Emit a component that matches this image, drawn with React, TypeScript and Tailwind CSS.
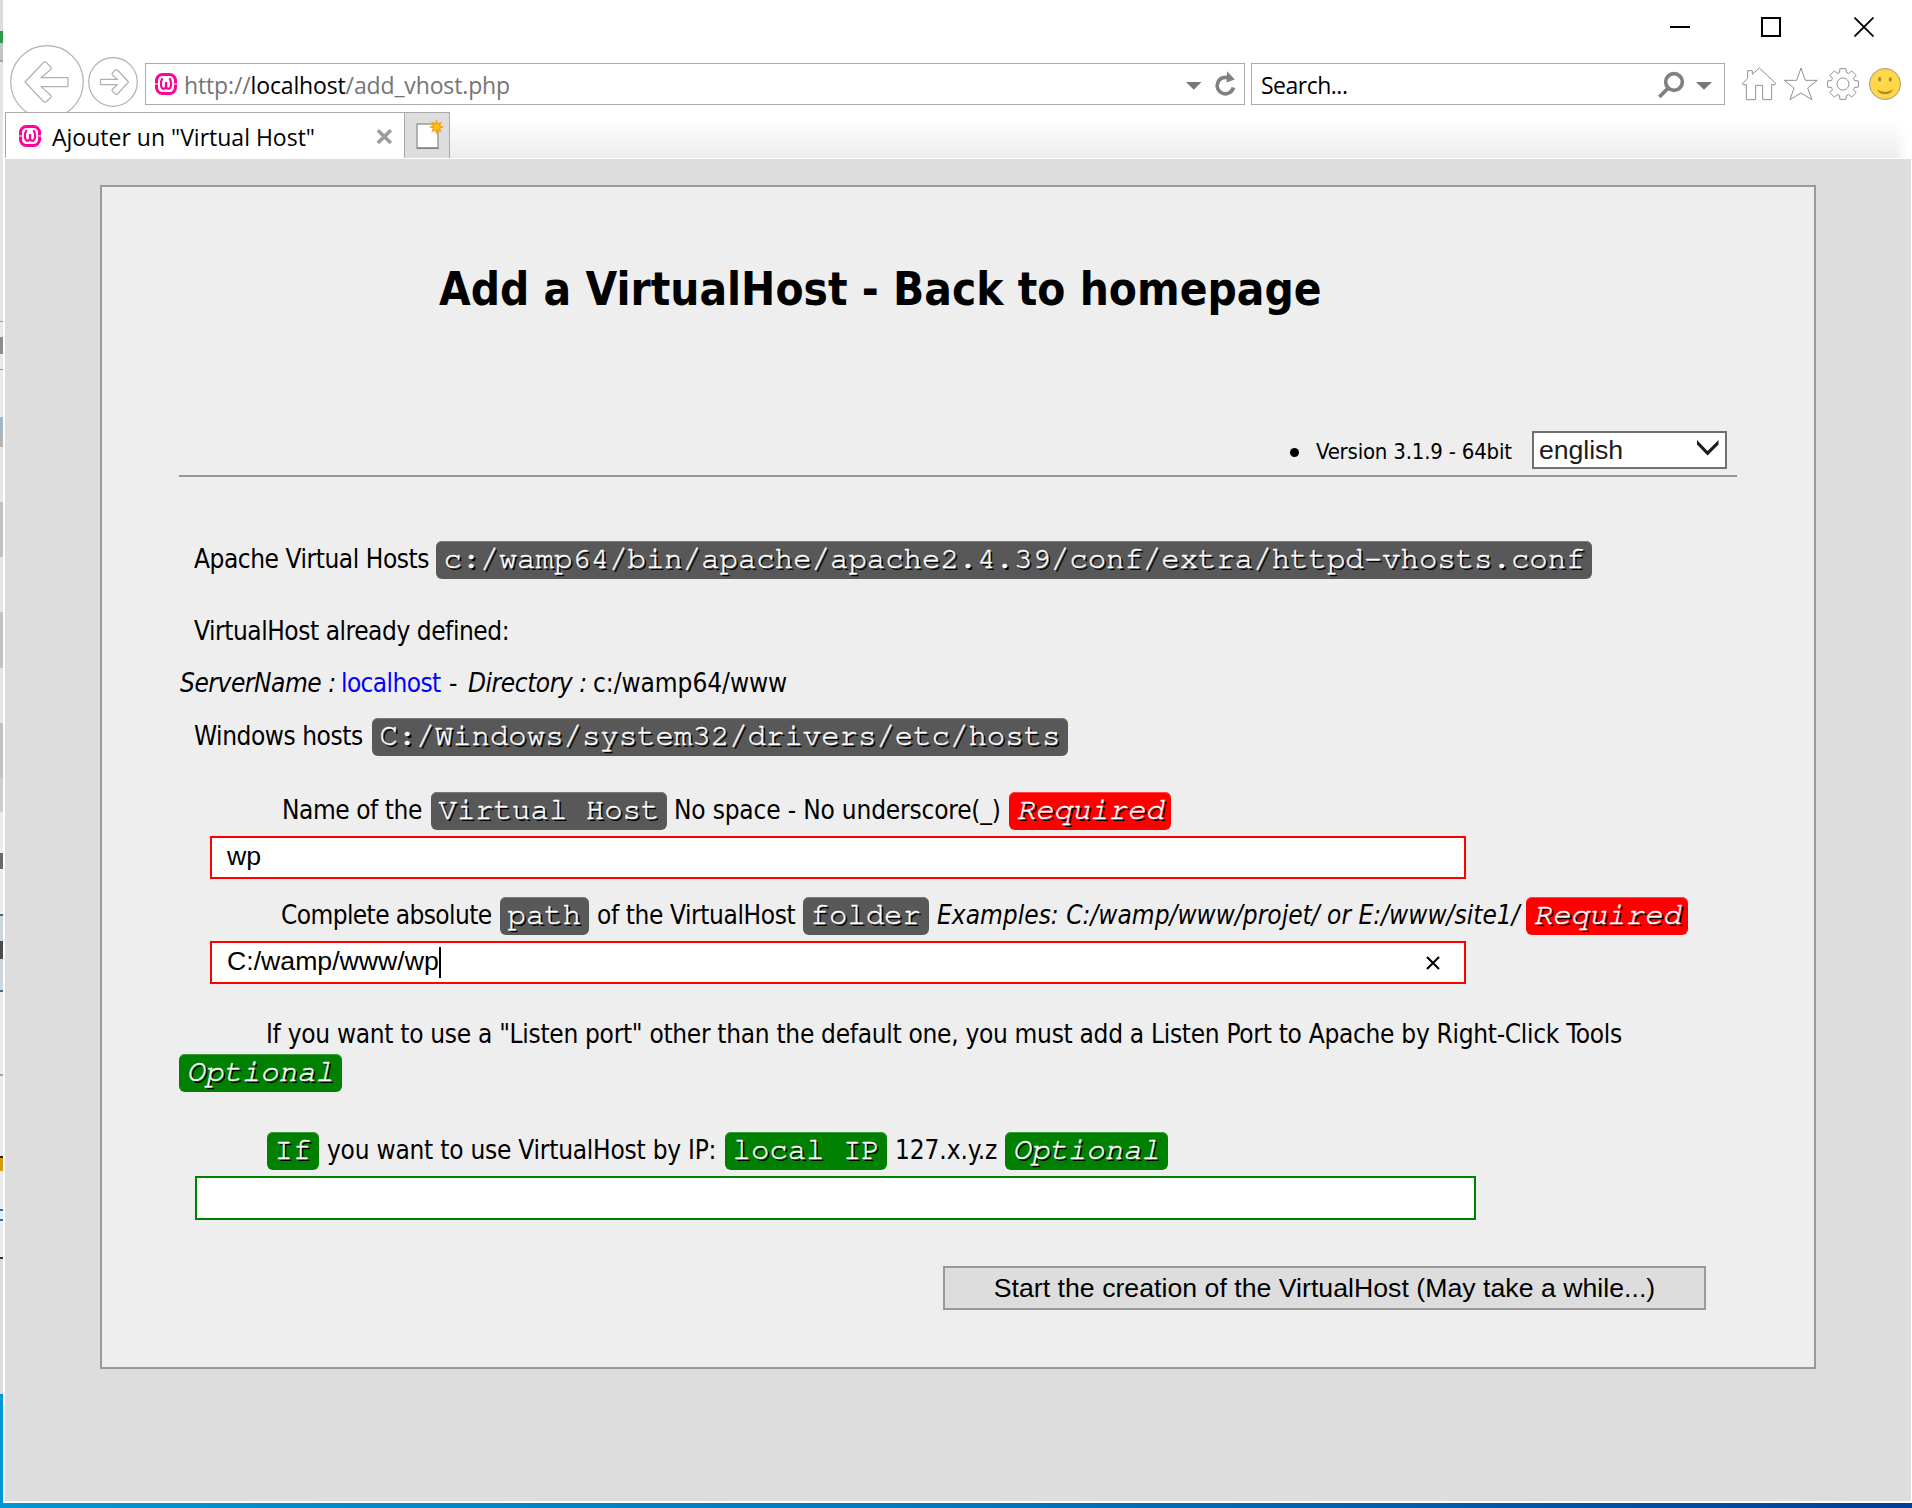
import type { ReactNode } from "react";

/* Slice of the windows lying behind the browser, visible along the left edge. */
const backdrop: [string, string][] = [
  ["h-[31px]", "bg-[#dcdcdc]"],
  ["h-[12px]", "bg-[#2e9a4a]"],
  ["h-[17px]", "bg-[#c4c4c4]"],
  ["h-[2px]", "bg-[#a4a4a4]"],
  ["h-[259px]", "bg-[#e4e5e6]"],
  ["h-[1px]", "bg-[#999999]"],
  ["h-[15px]", "bg-[#e9e9e9]"],
  ["h-[17px]", "bg-[#8c8c8c]"],
  ["h-[15px]", "bg-[#e9e9e9]"],
  ["h-[1px]", "bg-[#999999]"],
  ["h-[47px]", "bg-[#e9e9e9]"],
  ["h-[19px]", "bg-[#a3b8c8]"],
  ["h-[11px]", "bg-[#b4b4b4]"],
  ["h-[55px]", "bg-[#e6e6e6]"],
  ["h-[55px]", "bg-[#c2c2c2]"],
  ["h-[55px]", "bg-[#e6e6e6]"],
  ["h-[56px]", "bg-[#c2c2c2]"],
  ["h-[55px]", "bg-[#e6e6e6]"],
  ["h-[55px]", "bg-[#c2c2c2]"],
  ["h-[34px]", "bg-[#cfcfcf]"],
  ["h-[41px]", "bg-[#ececec]"],
  ["h-[16px]", "bg-[#6a6a6a]"],
  ["h-[45px]", "bg-[#ececec]"],
  ["h-[2px]", "bg-[#37717a]"],
  ["h-[25px]", "bg-[#cfd6dc]"],
  ["h-[18px]", "bg-[#4a4c50]"],
  ["h-[31px]", "bg-[#cfd6dc]"],
  ["h-[2px]", "bg-[#3b6a8c]"],
  ["h-[82px]", "bg-[#ececec]"],
  ["h-[2px]", "bg-[#a0a0a0]"],
  ["h-[80px]", "bg-[#ececec]"],
  ["h-[2px]", "bg-[#222222]"],
  ["h-[13px]", "bg-[#d59a05]"],
  ["h-[38px]", "bg-[#ececec]"],
  ["h-[2px]", "bg-[#1672c4]"],
  ["h-[8px]", "bg-[#ececec]"],
  ["h-[2px]", "bg-[#1672c4]"],
  ["h-[36px]", "bg-[#ececec]"],
  ["h-[2px]", "bg-[#333333]"],
  ["h-[135px]", "bg-[#dcdcde]"],
  ["grow", "bg-[#0097d6]"],
];

const chipTone = {
  gray: "bg-[#585858] shadow-[inset_0_1px_0_#7a7a7a]",
  red: "bg-[#ff0000] shadow-[inset_0_1px_0_#ff4444]",
  green: "bg-[#008000] shadow-[inset_0_1px_0_#3c9c3c]",
};

function Chip({ tone = "gray", italic = false, className = "", children }: { tone?: keyof typeof chipTone; italic?: boolean; className?: string; children: ReactNode }) {
  return (
    <code
      className={`block h-[38px] shrink-0 rounded-md pl-[7.5px] text-[30.67px] leading-[36px] tracking-[0.01px] text-white [-webkit-text-stroke:0.4px_white] [text-shadow:2px_2px_0_#000] [font-family:FreeMono,'Liberation_Mono',monospace] ${chipTone[tone]} ${italic ? "italic" : ""} ${className}`}
    >
      {children}
    </code>
  );
}

function Txt({ className = "", children }: { className?: string; children: ReactNode }) {
  return <span className={`block shrink-0 leading-[37px] ${className}`}>{children}</span>;
}

function Row({ className = "", children }: { className?: string; children: ReactNode }) {
  return <div className={`flex items-start ${className}`}>{children}</div>;
}

function WampIcon({ className = "" }: { className?: string }) {
  return (
    <svg className={`h-[22px] w-[22px] shrink-0 ${className}`} viewBox="0 0 22 22" fill="none">
      <rect x="1.5" y="1.5" width="19" height="19" rx="6" stroke="#ff0099" strokeWidth="3" />
      <path d="M0 11h4M18 11h4" stroke="#fff" strokeWidth="1.2" />
      <path d="M7.500 5.200Q5.600 8 6 12Q6.300 15.800 8.500 15.800Q11 15.800 11 12.500V9M11 12.500Q11 15.800 13.500 15.800Q15.700 15.800 16 12Q16.400 8 14.500 5.200" stroke="#ff0099" strokeWidth="2.2" />
    </svg>
  );
}

const gearPath = (() => {
  const pts: string[] = [];
  for (let i = 0; i < 8; i++) {
    const a = (i * Math.PI) / 4;
    for (const [off, r] of [[-0.29, 36], [-0.2, 47], [0.2, 47], [0.29, 36]]) {
      pts.push(`${(609 + r * Math.cos(a + off)).toFixed(1)} ${(102 + r * Math.sin(a + off)).toFixed(1)}`);
    }
  }
  return `M${pts.join("L")}Z`;
})();

function TitleBar() {
  return (
    <div className="flex h-[45px] items-start justify-end pt-[17px] pr-[38px]">
      <svg className="h-[20px] w-[204px]" viewBox="0 0 204 20" fill="none" stroke="#000">
        <path d="M0 10h20" strokeWidth="2" />
        <rect x="92" y="1" width="18" height="18" strokeWidth="2" />
        <path d="M184.500 0.500l19 19M203.500 0.500l-19 19" strokeWidth="1.8" />
      </svg>
    </div>
  );
}

function NavBar() {
  return (
    <div className="flex h-[67px] items-start overflow-hidden pl-[7px] text-[23px] [font-family:'Open_Sans',sans-serif]">
      <svg className="h-[74px] w-[74px] shrink-0" viewBox="10 45 74 74" fill="#fff" stroke="#b0b0b0" strokeWidth="1.2">
        <circle cx="47" cy="82" r="36.3" />
        <path strokeLinejoin="round" d="M25 82L43.500 62.500Q45 61.200 46.500 62.700L50.500 66.800Q52 68.200 50.500 69.700L41 77.700H68V86.600H41L50.500 95Q52 96.500 50.500 97.800L46.500 101.500Q45 102.800 43.500 101.500Z" />
      </svg>
      <svg className="mt-[12px] ml-[4px] h-[50px] w-[50px] shrink-0" viewBox="88 57 50 50" fill="#fff" stroke="#b0b0b0" strokeWidth="1.2">
        <circle cx="113" cy="82" r="24.300" />
        <path strokeLinejoin="round" d="M128.500 82L117.500 70Q116.300 69 115.200 70L112.500 72.800Q111.500 74 112.500 75.200L117.500 79.400H100.500V84.600H117.500L112.500 89Q111.500 90.200 112.500 91.400L115.200 94Q116.300 95 117.500 94Z" />
      </svg>
      <div className="mt-[18px] ml-[7px] flex h-[42px] w-[1100px] shrink-0 items-start border border-[#aaaaaa] pl-[9px] leading-[42px]">
        <WampIcon className="mt-[9px]" />
        <span className="ml-[7px] grow tracking-[-0.14px] text-[#757575]">
          http://<span className="text-black">localhost</span>/add_vhost.php
        </span>
        <svg className="mt-[3px] mr-[2px] h-[36px] w-[56px]" viewBox="0 0 56 36">
          <path d="M0 15h15.500l-7.700 7.700z" fill="#777" />
          <path d="M43.500 11.500A8.200 8.200 0 1 0 47.400 20.500" fill="none" stroke="#808080" strokeWidth="3.600" />
          <path d="M41 4.200L48.800 12.500L40.500 15.500Z" fill="#808080" />
        </svg>
      </div>
      <div className="mt-[18px] ml-[6px] flex h-[42px] w-[474px] shrink-0 items-start border border-[#aaaaaa] pl-[9px] leading-[42px]">
        <span className="grow tracking-[-0.5px] text-black">Search...</span>
        <svg className="mt-[6px] mr-[11px] h-[29px] w-[56px]" viewBox="51 60 168 87">
          <circle cx="102" cy="96" r="25" fill="none" stroke="#808080" strokeWidth="11" />
          <path d="M83 116L58 141" stroke="#808080" strokeWidth="11" />
          <path d="M168 96H216L192 119Z" fill="#777" />
        </svg>
      </div>
      <svg className="mt-[21px] ml-[15px] h-[35px] w-[38px] shrink-0" viewBox="300 48 114 105" fill="#fff" stroke="#909090" strokeWidth="3">
        <path d="M307 101L323 86V62H337V73L358 54L407 100L405 104H395V149H368V106H347V149H319V104H308Z" />
      </svg>
      <svg className="mt-[21px] ml-[4px] h-[35px] w-[38px] shrink-0" viewBox="426 48 114 105" fill="#fff" stroke="#909090" strokeWidth="3">
        <path d="M483 54L496 91H532L503 114L516 149L483 129L450 149L462 114L433 91H470Z" />
      </svg>
      <svg className="mt-[21px] ml-[5px] h-[35px] w-[36px] shrink-0" viewBox="555 48 108 105" fill="#fff" stroke="#909090" strokeWidth="3">
        <path d={gearPath} strokeLinejoin="round" />
        <circle cx="609" cy="102" r="18" />
      </svg>
      <svg className="mt-[21px] ml-[7px] h-[36px] w-[34px] shrink-0" viewBox="684 48 102 108">
        <circle cx="735" cy="102" r="46.500" fill="#ffd84a" stroke="#a09a80" strokeWidth="3" />
        <ellipse cx="719" cy="88" rx="4.500" ry="7" fill="#a98a2c" />
        <ellipse cx="751" cy="88" rx="4.500" ry="7" fill="#a98a2c" />
        <path d="M711 118Q735 134 759 118Q754 133 735 133Q716 133 711 118Z" fill="#a98a2c" />
      </svg>
    </div>
  );
}

function TabBar() {
  return (
    <div className="flex h-[46px] pr-[4px] pl-[2px]">
      <div className="flex w-[399px] shrink-0 items-start border-t border-l border-[#aaaaaa] bg-white pl-[13px] text-[23px] leading-[48px] [font-family:'Open_Sans',sans-serif]">
        <WampIcon className="mt-[12px]" />
        <span className="ml-[11px] w-[324px] shrink-0 text-black">Ajouter un "Virtual Host"</span>
        <svg className="mt-[15px] h-[17px] w-[17px]" viewBox="0 0 17 17">
          <path d="M1.800 2.300L14.800 15M14.800 2.300L1.800 15" stroke="#9c9c9c" strokeWidth="3.600" />
        </svg>
      </div>
      <div className="w-[46px] shrink-0 border-t border-r border-l border-[#aaaaaa] bg-[#dddddd]">
        <svg className="mt-[6px] ml-[11px] h-[32px] w-[30px]" viewBox="0 0 30 32">
          <rect x="1" y="5" width="21" height="24" fill="#fff" stroke="#a0a0a0" strokeWidth="1.600" />
          <path d="M1 29.300H22.500" stroke="#808080" strokeWidth="1.400" />
          <path d="M20.500 0.500l1.500 3.800 3.700-1.800-1.500 3.800 3.900 1.700-3.900 1.600 1.500 3.800-3.700-1.700-1.500 3.800-1.600-3.800-3.700 1.700 1.600-3.800-3.900-1.600 3.900-1.700-1.600-3.800 3.700 1.800z" fill="#f5a31a" />
          <circle cx="20.500" cy="8" r="3" fill="#ffc20e" />
        </svg>
      </div>
      <div className="grow bg-linear-to-b from-white from-10% to-[#ededed] [mask-image:linear-gradient(to_left,transparent,black_14px)]" />
    </div>
  );
}

function VhostPanel() {
  return (
    <main className="h-[1184px] w-[1716px] border-2 border-[#999999] bg-[#eeeeee] pl-[77px] text-[26px] tracking-[-0.45px] whitespace-nowrap text-black [font-family:'DejaVu_Sans_Condensed','DejaVu_Sans',sans-serif] [font-stretch:condensed]">
      <h1 className="mt-[73px] ml-[260px] text-[45.500px] leading-[60px] font-bold tracking-[0.02px]">Add a VirtualHost - Back to homepage</h1>
      <Row className="mt-[111px] h-[38px]">
        <span className="mt-[16.500px] ml-[1111px] h-[9px] w-[9px] rounded-full bg-black" />
        <span className="ml-[17px] w-[216px] shrink-0 text-[22px] leading-[41px] tracking-[-0.2px]">Version 3.1.9 - 64bit</span>
        <div className="flex h-[38px] w-[195px] shrink-0 items-start border-2 border-[#707070] bg-white pl-[5px] text-[26.67px] leading-[34px] tracking-[-0.05px] text-[#1c1c1c] [font-family:'Liberation_Sans',Arial,sans-serif]">
          <span className="w-[157px] shrink-0">english</span>
          <svg className="mt-[6px] h-[17px] w-[23px] shrink-0" viewBox="0 0 23 17">
            <path d="M1 1V5.500L11.500 16.500L22.500 5.500V1L11.500 12Z" fill="#1c1c1c" />
          </svg>
        </div>
      </Row>
      <div className="mt-[6px] h-[2px] w-[1558px] bg-[#999999]" />

      <Row className="mt-[64px] h-[38px] pl-[15px]">
        <Txt className="w-[242px]">Apache Virtual Hosts</Txt>
        <Chip className="w-[1156px]">c:/wamp64/bin/apache/apache2.4.39/conf/extra/httpd-vhosts.conf</Chip>
      </Row>
      <Row className="mt-[34px] h-[36px] pl-[15px]">
        <Txt>VirtualHost already defined:</Txt>
      </Row>
      <Row className="mt-[16px] h-[36px] pl-[1px]">
        <Txt className="w-[161px] italic">ServerName :</Txt>
        <Txt className="w-[108px] tracking-[-0.6px] text-[#0000ff]">localhost</Txt>
        <Txt className="w-[19px]">-</Txt>
        <Txt className="w-[125px] italic">Directory :</Txt>
        <Txt className="tracking-[-0.05px]">c:/wamp64/www</Txt>
      </Row>
      <Row className="mt-[17px] h-[38px] pl-[15px]">
        <Txt className="w-[178px]">Windows hosts</Txt>
        <Chip className="w-[696px]">C:/Windows/system32/drivers/etc/hosts</Chip>
      </Row>

      <Row className="mt-[36px] h-[38px] pl-[103px]">
        <Txt className="w-[149px]">Name of the</Txt>
        <Chip className="w-[236px]">Virtual Host</Chip>
        <Txt className="ml-[7px] w-[335px] tracking-[-0.18px]">No space - No underscore(_)</Txt>
        <Chip tone="red" italic className="w-[162px]">Required</Chip>
      </Row>
      <div className="mt-[6px] ml-[31px] h-[43px] w-[1256px] border-2 border-[#ff0000] bg-white pl-[15px] text-[26.67px] leading-[37px] tracking-normal [font-family:'Liberation_Sans',Arial,sans-serif]">
        wp
      </div>
      <Row className="mt-[18px] h-[38px] pl-[102px]">
        <Txt className="w-[219px] tracking-[-0.6px]">Complete absolute</Txt>
        <Chip className="w-[89px]">path</Chip>
        <Txt className="ml-[8px] w-[206px] tracking-[-0.4px]">of the VirtualHost</Txt>
        <Chip className="w-[126px]">folder</Chip>
        <Txt className="ml-[8px] w-[589px] tracking-[0.02px] italic">Examples: C:/wamp/www/projet/ or E:/www/site1/</Txt>
        <Chip tone="red" italic className="w-[162px]">Required</Chip>
      </Row>
      <div className="mt-[6px] ml-[31px] flex h-[43px] w-[1256px] items-start border-2 border-[#ff0000] bg-white pl-[15px] text-[26.67px] leading-[37px] tracking-normal [font-family:'Liberation_Sans',Arial,sans-serif]">
        <span>C:/wamp/www/wp</span>
        <span className="mt-[4px] h-[31px] w-[2px] bg-black" />
        <svg className="mt-[13px] mr-[24px] ml-auto h-[14px] w-[14px]" viewBox="0 0 14 14">
          <path d="M1 1L13 13M13 1L1 13" stroke="#000" strokeWidth="2.1" />
        </svg>
      </div>

      <Row className="mt-[32px] h-[36px] pl-[87px]">
        <Txt className="tracking-[-0.295px]">If you want to use a "Listen port" other than the default one, you must add a Listen Port to Apache by Right-Click Tools</Txt>
      </Row>
      <Row className="mt-[2px] h-[37px]">
        <Chip tone="green" italic className="h-[37px] w-[163px]">Optional</Chip>
      </Row>
      <Row className="mt-[41px] h-[38px] pl-[88px]">
        <Chip tone="green" className="w-[52px]">If</Chip>
        <Txt className="ml-[8px] w-[398px] tracking-[-0.23px]">you want to use VirtualHost by IP:</Txt>
        <Chip tone="green" className="w-[162px]">local IP</Chip>
        <Txt className="ml-[8px] w-[110px] tracking-[-0.1px]">127.x.y.z</Txt>
        <Chip tone="green" italic className="w-[163px]">Optional</Chip>
      </Row>
      <div className="mt-[6px] ml-[16px] h-[44px] w-[1281px] border-2 border-[#008000] bg-white" />
      <button className="mt-[46px] ml-[764px] block h-[44px] w-[763px] border-2 border-[#999999] bg-[#dddddd] text-center text-[26.67px] leading-[39px] tracking-[0.02px] [font-family:'Liberation_Sans',Arial,sans-serif]">
        Start the creation of the VirtualHost (May take a while...)
      </button>
    </main>
  );
}

export default function App() {
  return (
    <div className="flex h-[1508px] w-[1912px] flex-col overflow-hidden bg-white">
      <div className="flex h-[1503px] shrink-0">
        <div className="flex w-[3px] shrink-0 flex-col">
          {backdrop.map(([h, c], i) => (
            <div key={i} className={`${h} ${c} shrink-0`} />
          ))}
        </div>
        <div className="flex grow flex-col bg-white">
          <TitleBar />
          <NavBar />
          <TabBar />
          <div className="mt-[1px] mr-[1px] mb-[2px] ml-[2px] grow bg-[#dddddd] pt-[26px] pl-[95px]">
            <VhostPanel />
          </div>
        </div>
      </div>
      <div className="h-[5px] bg-linear-to-r from-[#0095d3] via-[#0078c0] via-50% to-[#003f9c]" />
    </div>
  );
}
